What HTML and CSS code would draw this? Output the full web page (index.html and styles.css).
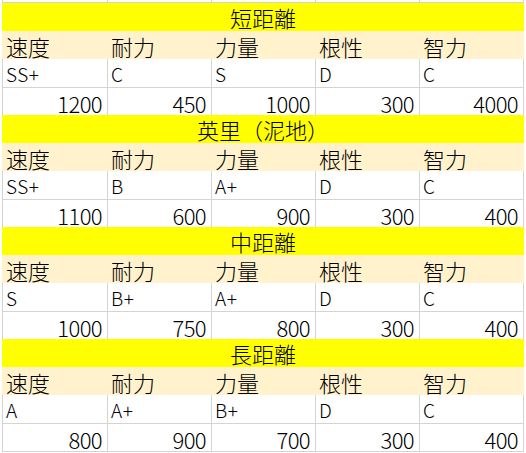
FILE: index.html
```html
<!DOCTYPE html>
<html lang="ja">
<head>
<meta charset="utf-8">
<title>距離別ステータス</title>
<link rel="stylesheet" href="styles.css">
</head>
<body>
<div class="sheet">
  <div class="row strip"><div class="cell"></div><div class="cell"></div><div class="cell"></div><div class="cell"></div><div class="cell"></div></div>

  <section class="block">
    <div class="title">短距離</div>
    <div class="row head"><div class="cell">速度</div><div class="cell">耐力</div><div class="cell">力量</div><div class="cell">根性</div><div class="cell">智力</div></div>
    <div class="row grade"><div class="cell">SS+</div><div class="cell">C</div><div class="cell">S</div><div class="cell">D</div><div class="cell">C</div></div>
    <div class="row num"><div class="cell">1200</div><div class="cell">450</div><div class="cell">1000</div><div class="cell">300</div><div class="cell">4000</div></div>
  </section>

  <section class="block">
    <div class="title">英里（泥地）</div>
    <div class="row head"><div class="cell">速度</div><div class="cell">耐力</div><div class="cell">力量</div><div class="cell">根性</div><div class="cell">智力</div></div>
    <div class="row grade"><div class="cell">SS+</div><div class="cell">B</div><div class="cell">A+</div><div class="cell">D</div><div class="cell">C</div></div>
    <div class="row num"><div class="cell">1100</div><div class="cell">600</div><div class="cell">900</div><div class="cell">300</div><div class="cell">400</div></div>
  </section>

  <section class="block">
    <div class="title">中距離</div>
    <div class="row head"><div class="cell">速度</div><div class="cell">耐力</div><div class="cell">力量</div><div class="cell">根性</div><div class="cell">智力</div></div>
    <div class="row grade"><div class="cell">S</div><div class="cell">B+</div><div class="cell">A+</div><div class="cell">D</div><div class="cell">C</div></div>
    <div class="row num"><div class="cell">1000</div><div class="cell">750</div><div class="cell">800</div><div class="cell">300</div><div class="cell">400</div></div>
  </section>

  <section class="block last">
    <div class="title">長距離</div>
    <div class="row head"><div class="cell">速度</div><div class="cell">耐力</div><div class="cell">力量</div><div class="cell">根性</div><div class="cell">智力</div></div>
    <div class="row grade"><div class="cell">A</div><div class="cell">A+</div><div class="cell">B+</div><div class="cell">D</div><div class="cell">C</div></div>
    <div class="row num"><div class="cell">800</div><div class="cell">900</div><div class="cell">700</div><div class="cell">300</div><div class="cell">400</div></div>
  </section>
</div>
</body>
</html>
```

FILE: styles.css
```css
html, body {
  margin: 0;
  padding: 0;
  background: #ffffff;
}

body {
  font-family: "Noto Sans CJK JP", "Noto Sans CJK SC", sans-serif;
  font-weight: 300;
  color: #000000;
}

.sheet {
  margin-left: 2px;
  width: 522px;
}

.row {
  display: grid;
  grid-template-columns: 106px repeat(4, 104px);
}

.cell {
  box-sizing: border-box;
  display: flex;
  align-items: flex-end;
  line-height: 1;
  white-space: nowrap;
}

.strip .cell,
.grade .cell,
.num .cell {
  border-right: 1px solid #d4d4d4;
}

.strip .cell:first-child,
.grade .cell:first-child,
.num .cell:first-child {
  border-left: 1px solid #d4d4d4;
}

.strip {
  height: 3px;
  border-bottom: 1px solid #d4d4d4;
  box-sizing: border-box;
}

.title {
  height: 28px;
  background: #ffff00;
  display: flex;
  align-items: flex-end;
  justify-content: center;
  font-size: 22px;
  line-height: 1;
  padding-bottom: 3px;
  box-sizing: border-box;
}

.head {
  height: 28px;
  background: #fff2cc;
}

.head .cell {
  font-size: 22px;
  padding: 0 0 2px 3px;
}

.head .cell:first-child {
  padding-left: 4px;
}

.grade {
  height: 29px;
  border-bottom: 1px solid #d4d4d4;
  box-sizing: border-box;
}

.grade .cell {
  font-size: 19px;
  letter-spacing: 0.5px;
  padding: 0 0 4px 3px;
}

.num {
  height: 27px;
}

.num .cell {
  font-size: 22px;
  letter-spacing: -0.6px;
  justify-content: flex-end;
  padding: 0 5px 1px 0;
}

.last .num {
  height: 28px;
  border-bottom: 1px solid #d4d4d4;
  box-sizing: border-box;
}
```
